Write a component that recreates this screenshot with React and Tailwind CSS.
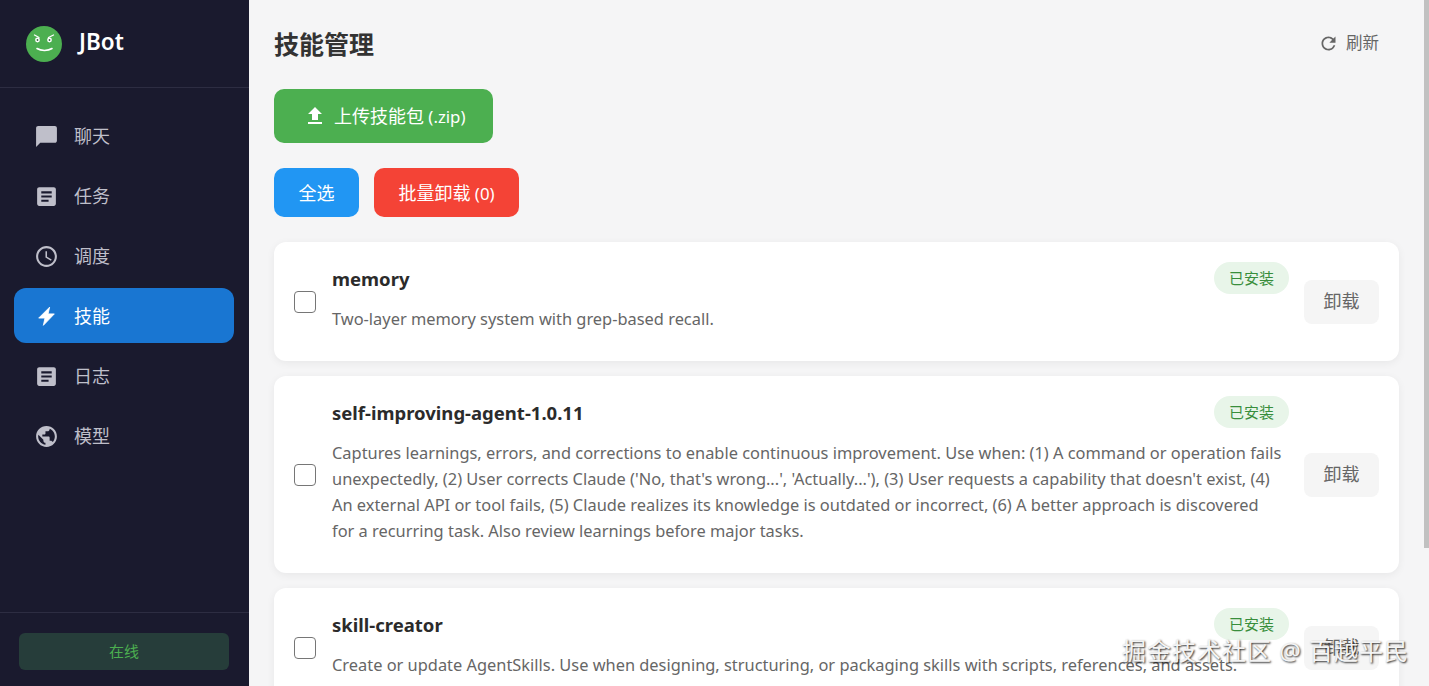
import { MdChatBubble, MdArticle, MdAccessTime, MdPublic, MdFileUpload, MdRefresh } from 'react-icons/md';

function BoltIcon({ className }) {
  return (
    <svg viewBox="0 0 24 24" fill="currentColor" stroke="currentColor" strokeWidth="0.8" strokeLinejoin="round" className={className}>
      <path d="M15 3 4.5 13.5h6L9 20.5 19.5 9.5h-6L15 3z" />
    </svg>
  );
}

const navItems = [
  { label: '聊天', icon: MdChatBubble },
  { label: '任务', icon: MdArticle },
  { label: '调度', icon: MdAccessTime },
  { label: '技能', icon: BoltIcon, active: true },
  { label: '日志', icon: MdArticle },
  { label: '模型', icon: MdPublic },
];

const skills = [
  { name: 'memory', desc: 'Two-layer memory system with grep-based recall.' },
  {
    name: 'self-improving-agent-1.0.11',
    desc: "Captures learnings, errors, and corrections to enable continuous improvement. Use when: (1) A command or operation fails unexpectedly, (2) User corrects Claude ('No, that's wrong...', 'Actually...'), (3) User requests a capability that doesn't exist, (4) An external API or tool fails, (5) Claude realizes its knowledge is outdated or incorrect, (6) A better approach is discovered for a recurring task. Also review learnings before major tasks.",
  },
  {
    name: 'skill-creator',
    desc: 'Create or update AgentSkills. Use when designing, structuring, or packaging skills with scripts, references, and assets.',
  },
];

function Logo() {
  return (
    <svg viewBox="0 0 36 36" className="w-9 h-9 shrink-0">
      <circle cx="18" cy="18" r="18" fill="#4caf50" />
      <circle cx="11.5" cy="14" r="2.4" fill="#fff" />
      <circle cx="23.5" cy="14" r="2.4" fill="#fff" />
      <circle cx="11.5" cy="14" r="0.9" fill="#3a6a42" />
      <circle cx="23.5" cy="14" r="0.9" fill="#3a6a42" />
      <path d="M8.5 9 13 11.5M27.5 9 22.5 11.5" stroke="#fff" strokeWidth="1.3" strokeLinecap="round" />
      <path d="M11 22.5c4 2.6 11 2.6 15 0" fill="none" stroke="#fff" strokeWidth="1.6" strokeLinecap="round" />
    </svg>
  );
}

function SkillCard({ name, desc }) {
  return (
    <div className="flex items-center bg-white rounded-xl p-5 shadow-[0_2px_8px_rgba(0,0,0,0.06)]">
      <div className="w-[22px] h-[22px] shrink-0 mr-4 rounded-[4px] border border-[#767676] bg-white" />
      <div className="flex-1 min-w-0">
        <div className="flex items-center justify-between h-8">
          <div className="pt-[1px] text-[18.5px] font-bold text-[#2b2b2b]">{name}</div>
          <div className="flex items-center h-8 px-[15px] rounded-2xl bg-[#e8f5e9] text-[15px] text-[#388e3c]">已安装</div>
        </div>
        <p className="mt-3 mb-[9px] pr-[6px] text-[16.4px] leading-[26px] text-[#666]">{desc}</p>
      </div>
      <button className="shrink-0 ml-[15px] w-[75px] h-11 rounded-lg bg-[#f5f5f5] text-[18px] text-[#666]">卸载</button>
    </div>
  );
}

export default function App() {
  return (
    <div className="relative flex h-[686px] overflow-hidden bg-[#f5f5f6] font-['Noto_Sans','Noto_Sans_CJK_SC',sans-serif]">
      <aside className="flex flex-col w-[249px] shrink-0 bg-[#1a1a2e]">
        <div className="flex items-center gap-[17px] h-[88px] pl-[26px] border-b border-[#2d2d42]">
          <Logo />
          <span className="mb-1 text-[22.5px] font-semibold text-white">JBot</span>
        </div>
        <nav className="flex-1 flex flex-col gap-[5px] pt-5 pl-[14px] pr-[15px]">
          {navItems.map(({ label, icon: Icon, active }) => (
            <div
              key={label}
              className={active
                ? 'flex items-center gap-[15px] h-[55px] pt-[2px] px-5 rounded-xl bg-[#1976d2] text-white'
                : 'flex items-center gap-[15px] h-[55px] pt-[2px] px-5 rounded-xl text-[#bfbfca]'}
            >
              <Icon className="w-[25px] h-[25px] shrink-0" />
              <span className="text-[18px]">{label}</span>
            </div>
          ))}
        </nav>
        <div className="border-t border-[#2d2d42] pl-[19px] pr-5 pt-5 pb-4">
          <div className="flex items-center justify-center h-[37px] rounded-md bg-[#263d3a] text-[15px] text-[#4caf50]">在线</div>
        </div>
      </aside>

      <main className="flex-1 min-w-0 px-[25px] pt-[25px]">
        <div className="flex items-center justify-between h-[40px]">
          <h1 className="text-[25px] font-bold text-[#333]">技能管理</h1>
          <button className="flex items-center gap-[7px] -mt-[3px] pr-5 text-[16.5px] text-[#666]">
            <MdRefresh className="w-[21px] h-[21px]" />
            刷新
          </button>
        </div>
        <button className="flex items-center gap-[7px] mt-6 w-[219px] h-[54px] pl-[29px] rounded-[10px] bg-[#4caf50] text-[18px] text-white">
          <MdFileUpload className="w-6 h-6" />
          <span>上传技能包<span className="text-[16.8px]"> (.zip)</span></span>
        </button>
        <div className="flex gap-[15px] mt-[25px]">
          <button className="w-[85px] h-[49px] pt-[2px] rounded-[10px] bg-[#2196f3] text-[18px] text-white">全选</button>
          <button className="w-[145px] h-[49px] pt-[2px] rounded-[10px] bg-[#f44336] text-[18px] text-white">批量卸载<span className="text-[16.8px]"> (0)</span></button>
        </div>
        <div className="flex flex-col gap-[15px] mt-[25px]">
          {skills.map((s) => (
            <SkillCard key={s.name} {...s} />
          ))}
        </div>
      </main>

      {/* scrollbar */}
      <div className="w-[5px] shrink-0 bg-[#f5f5f6]">
        <div className="h-[548px] bg-[#c1c1c1]" />
      </div>

      {/* watermark */}
      <div className="absolute right-[20px] bottom-[19px] text-[24px] leading-[32px] tracking-[1px] text-[#f4f4f4] [text-shadow:1px_1px_2px_rgba(0,0,0,0.85)]">
        掘金技术社区 @ 百越平民
      </div>
    </div>
  );
}
